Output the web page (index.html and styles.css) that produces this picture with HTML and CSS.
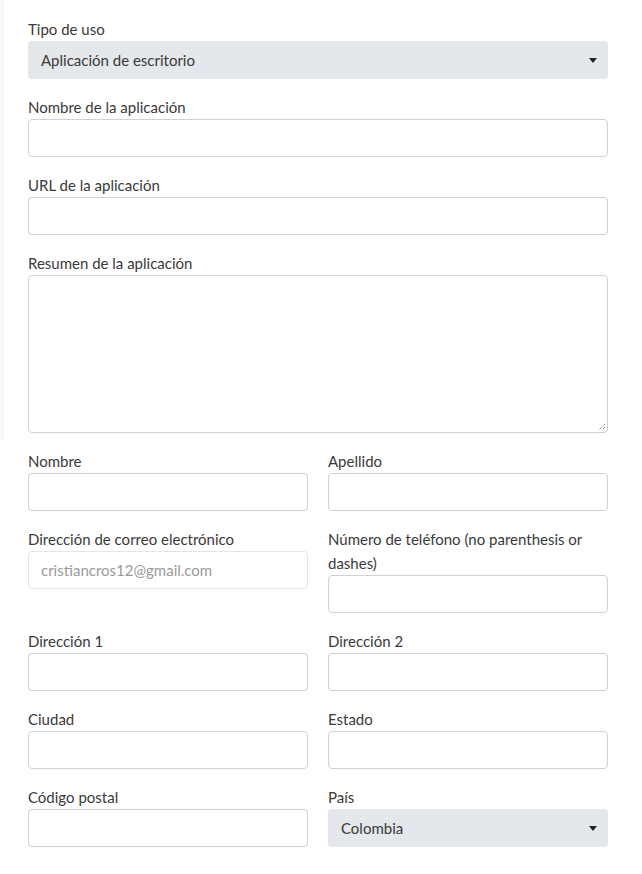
FILE: index.html
```html
<!DOCTYPE html>
<html lang="es">
<head>
<meta charset="utf-8">
<link rel="stylesheet" href="styles.css">
</head>
<body>
<div class="edge"></div>
<form class="form">
  <div class="field">
    <label class="label">Tipo de uso</label>
    <div class="select"><span>Aplicación de escritorio</span><svg class="caret" width="8" height="5" viewBox="0 0 8 5"><path d="M0 0H8L4 5Z" fill="#222"/></svg></div>
  </div>
  <div class="field">
    <label class="label">Nombre de la aplicación</label>
    <div class="input"></div>
  </div>
  <div class="field">
    <label class="label">URL de la aplicación</label>
    <div class="input"></div>
  </div>
  <div class="field">
    <label class="label">Resumen de la aplicación</label>
    <div class="input textarea"><svg class="grip" width="8" height="8" viewBox="0 0 8 8"><path d="M7 1L1 7M7 4L4 7M7 7L7 7" stroke="#666" stroke-width="1" stroke-dasharray="1 1"/></svg></div>
  </div>
  <div class="row">
    <div class="field">
      <label class="label">Nombre</label>
      <div class="input"></div>
    </div>
    <div class="field">
      <label class="label">Apellido</label>
      <div class="input"></div>
    </div>
  </div>
  <div class="row">
    <div class="field">
      <label class="label">Dirección de correo electrónico</label>
      <div class="input disabled"><span>cristiancros12@gmail.com</span></div>
    </div>
    <div class="field">
      <label class="label">Número de teléfono (no parenthesis or dashes)</label>
      <div class="input"></div>
    </div>
  </div>
  <div class="row">
    <div class="field">
      <label class="label">Dirección 1</label>
      <div class="input"></div>
    </div>
    <div class="field">
      <label class="label">Dirección 2</label>
      <div class="input"></div>
    </div>
  </div>
  <div class="row">
    <div class="field">
      <label class="label">Ciudad</label>
      <div class="input"></div>
    </div>
    <div class="field">
      <label class="label">Estado</label>
      <div class="input"></div>
    </div>
  </div>
  <div class="row">
    <div class="field">
      <label class="label">Código postal</label>
      <div class="input"></div>
    </div>
    <div class="field">
      <label class="label">País</label>
      <div class="select"><span>Colombia</span><svg class="caret" width="8" height="5" viewBox="0 0 8 5"><path d="M0 0H8L4 5Z" fill="#222"/></svg></div>
    </div>
  </div>
</form>
</body>
</html>
```
FILE: styles.css
```css
html, body {
  margin: 0;
  padding: 0;
  background: #fff;
}
body {
  font-family: Lato, "Open Sans", sans-serif;
  font-size: 15px;
  color: #3a3a3a;
  position: relative;
}
.edge {
  position: absolute;
  left: 0;
  top: 0;
  width: 4px;
  height: 440px;
  background: #f8f8f8;
}
.form {
  display: flex;
  flex-direction: column;
  gap: 16px;
  padding: 17px 34px 0 28px;
}
.row {
  display: grid;
  grid-template-columns: 1fr 1fr;
  column-gap: 20px;
  align-items: start;
}
.field {
  display: flex;
  flex-direction: column;
}
.label {
  display: block;
  line-height: 24px;
  color: #3a3a3a;
}
.select {
  height: 38px;
  box-sizing: border-box;
  background: #e4e7eb;
  border-radius: 4px;
  display: flex;
  align-items: center;
  justify-content: space-between;
  padding: 0 11px 0 13px;
  color: #3a3a3a;
}
.caret {
  display: block;
}
.input {
  height: 38px;
  box-sizing: border-box;
  border: 1px solid #ced2d8;
  border-radius: 4px;
  background: #fff;
  display: flex;
  align-items: center;
  padding: 0 12px;
}
.textarea {
  height: 158px;
  position: relative;
}
.grip {
  position: absolute;
  right: 1px;
  bottom: 1px;
}
.disabled {
  border-color: #e3e5e8;
  color: #9a9a9a;
}
```
